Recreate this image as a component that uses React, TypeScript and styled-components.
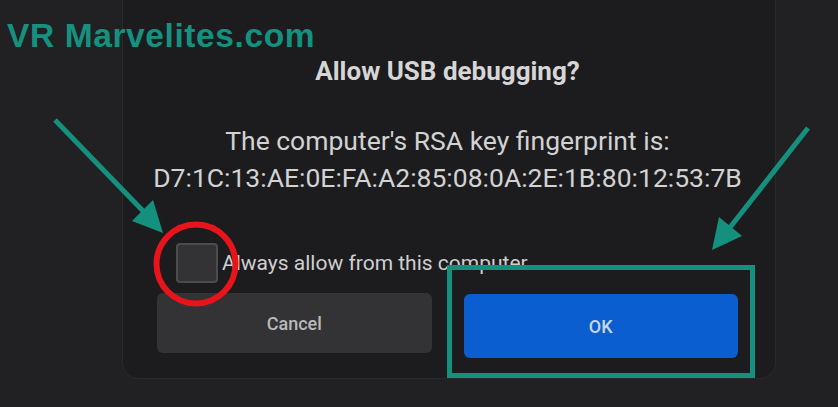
import React from "react";
import styled, { createGlobalStyle } from "styled-components";

const Global = createGlobalStyle`
  html, body { margin: 0; padding: 0; background: #212123; }
  #root { width: 838px; height: 407px; }
`;

const Screen = styled.div`
  position: relative;
  width: 838px;
  height: 407px;
  overflow: hidden;
  background: #212123;
  font-family: Roboto, "Liberation Sans", Arial, sans-serif;
`;

const Panel = styled.div`
  box-sizing: border-box;
  margin-left: 122px;
  width: 654px;
  height: 399px;
  margin-top: -20px;
  padding: 20px 37px 0 34px;
  background: #1c1c1e;
  border: 1px solid #2a2a2c;
  border-radius: 0 0 16px 16px;
  display: flex;
  flex-direction: column;
  align-items: center;
`;

const Title = styled.h1`
  margin: 55px 0 0;
  font-size: 26px;
  font-weight: 700;
  line-height: 30px;
  color: #d6d6d6;
`;

const Message = styled.p`
  margin: 36px 0 0;
  font-size: 26.5px;
  font-weight: 400;
  line-height: 37px;
  color: #d2d2d2;
  text-align: center;
`;

const CheckRow = styled.label`
  align-self: stretch;
  display: flex;
  align-items: center;
  gap: 4px;
  margin: 47px 0 0 19px;
  font-size: 21px;
  color: #cfcfcf;
`;

const Box = styled.span`
  box-sizing: border-box;
  width: 42px;
  height: 40px;
  border: 2px solid #4c4c4e;
  border-radius: 4px;
  background: #333335;
`;

const Buttons = styled.div`
  align-self: stretch;
  display: grid;
  grid-template-columns: 1fr 1fr;
  gap: 32px;
  margin-top: 10px;
`;

const Button = styled.button<{ $primary?: boolean }>`
  height: ${(p) => (p.$primary ? 64 : 60)}px;
  margin-top: ${(p) => (p.$primary ? 1 : 0)}px;
  border: none;
  border-radius: 6px;
  background: ${(p) => (p.$primary ? "#0a5ecf" : "#333335")};
  color: ${(p) => (p.$primary ? "#c9d6ec" : "#b9b9b9")};
  font-family: Roboto, "Liberation Sans", Arial, sans-serif;
  font-size: 18px;
  font-weight: 500;
`;

const Watermark = styled.div`
  position: absolute;
  left: 7px;
  top: 14px;
  font-family: "Liberation Sans", Arial, sans-serif;
  font-size: 33.5px;
  font-weight: 700;
  letter-spacing: 0.6px;
  color: #16917f;
  line-height: 44px;
`;

const Annotations = styled.svg`
  position: absolute;
  left: 0;
  top: 0;
  pointer-events: none;
`;

const TEAL = "#15907e";

export default function App() {
  return (
    <>
      <Global />
      <Screen>
        <Panel>
          <Title>Allow USB debugging?</Title>
          <Message>
            The computer's RSA key fingerprint is:
            <br />
            D7:1C:13:AE:0E:FA:A2:85:08:0A:2E:1B:80:12:53:7B
          </Message>
          <CheckRow>
            <Box />
            Always allow from this computer
          </CheckRow>
          <Buttons>
            <Button>Cancel</Button>
            <Button $primary>OK</Button>
          </Buttons>
        </Panel>
        <Watermark>VR Marvelites.com</Watermark>
        <Annotations width="838" height="407" viewBox="0 0 838 407">
          <line x1="55" y1="120" x2="145" y2="213" stroke={TEAL} strokeWidth="5" />
          <polygon points="163,233 132,221 153,200" fill={TEAL} />
          <line x1="808" y1="128" x2="728" y2="230" stroke={TEAL} strokeWidth="5" />
          <polygon points="712,250 719,217 742,236" fill={TEAL} />
          <circle cx="196" cy="264" r="39.5" fill="none" stroke="#e8141c" strokeWidth="6" />
          <rect x="449.5" y="267.5" width="303" height="108" fill="none" stroke={TEAL} strokeWidth="5" />
        </Annotations>
      </Screen>
    </>
  );
}
